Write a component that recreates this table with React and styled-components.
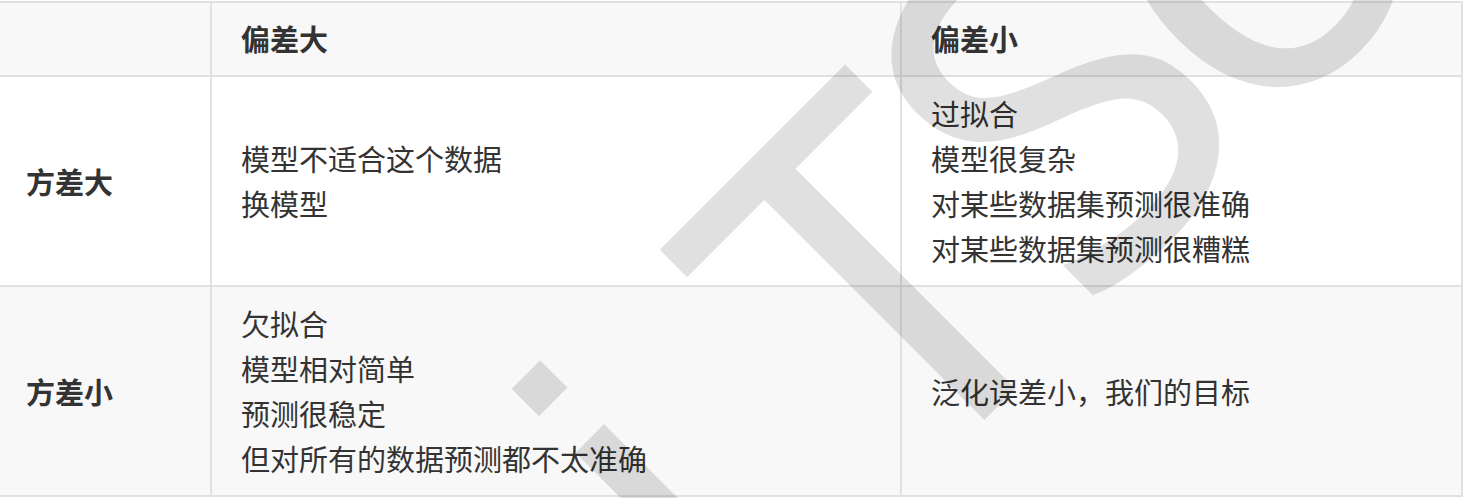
import styled, { createGlobalStyle } from "styled-components";

const GlobalStyle = createGlobalStyle`
  html, body {
    margin: 0;
    padding: 0;
    background: #ffffff;
  }
  body {
    font-family: "Noto Sans CJK SC", "Noto Sans", sans-serif;
    color: #333333;
  }
`;

const rows = [
  {
    label: "方差大",
    high: ["模型不适合这个数据", "换模型"],
    low: ["过拟合", "模型很复杂", "对某些数据集预测很准确", "对某些数据集预测很糟糕"],
  },
  {
    label: "方差小",
    high: ["欠拟合", "模型相对简单", "预测很稳定", "但对所有的数据预测都不太准确"],
    low: ["泛化误差小，我们的目标"],
  },
];

// watermark letters, placed along the rotated baseline
const markLetters = [
  { ch: "i", x: 56, y: 970, font: "'Liberation Sans', Arial, sans-serif", size: 460 },
  { ch: "T", x: 285, y: 993, font: "'Noto Sans', sans-serif", size: 490 },
  { ch: "S", x: 539, y: 993, font: "'Noto Sans', sans-serif", size: 490 },
  { ch: "o", x: 778, y: 993, font: "'Noto Sans', sans-serif", size: 490 },
];

const App = () => {
  return (
    <>
      <GlobalStyle />
      <Page>
        <Table>
          <colgroup>
            <col style={{ width: 212 }} />
            <col style={{ width: 690 }} />
            <col style={{ width: 561 }} />
          </colgroup>
          <thead>
            <HeadRow>
              <HeadCell $first></HeadCell>
              <HeadCell>偏差大</HeadCell>
              <HeadCell>偏差小</HeadCell>
            </HeadRow>
          </thead>
          <tbody>
            {rows.map((row, i) => (
              <BodyRow key={row.label} $shaded={i % 2 === 1}>
                <Cell $first>
                  <strong>{row.label}</strong>
                </Cell>
                <Cell>
                  {row.high.map((line) => (
                    <Line key={line}>{line}</Line>
                  ))}
                </Cell>
                <Cell>
                  {row.low.map((line) => (
                    <Line key={line}>{line}</Line>
                  ))}
                </Cell>
              </BodyRow>
            ))}
          </tbody>
        </Table>
        <Watermark width="1463" height="498" viewBox="0 0 1463 498">
          <g transform="rotate(-45)" fill="#000" fillOpacity="0.12">
            {markLetters.map((l) => (
              <text key={l.ch} x={l.x} y={l.y} fontFamily={l.font} fontSize={l.size}>
                {l.ch}
              </text>
            ))}
          </g>
        </Watermark>
      </Page>
    </>
  );
};

export default App;

//Styled Components

const Page = styled.div`
  position: relative;
  width: 1463px;
  height: 498px;
  overflow: hidden;
  padding-top: 1px;
  box-sizing: border-box;
`;

const Table = styled.table`
  border-collapse: collapse;
  table-layout: fixed;
  width: 1465px;
  margin-left: -2px;
  font-size: 29px;
  line-height: 45px;
`;

const HeadRow = styled.tr`
  background-color: #f8f8f8;
`;

const BodyRow = styled.tr`
  background-color: ${(p) => (p.$shaded ? "#f8f8f8" : "#ffffff")};
`;

const HeadCell = styled.th`
  border: 2px solid #dfe2e5;
  padding: 13px 29px 14px ${(p) => (p.$first ? "26px" : "29px")};
  text-align: left;
  font-weight: 700;
  height: 45px;
`;

const Cell = styled.td`
  border: 2px solid #dfe2e5;
  padding: 14px 29px 14px ${(p) => (p.$first ? "26px" : "29px")};
  vertical-align: middle;

  strong {
    font-weight: 700;
  }
`;

const Line = styled.span`
  display: block;
  white-space: nowrap;
`;

const Watermark = styled.svg`
  position: absolute;
  left: 0;
  top: 0;
  pointer-events: none;
`;
